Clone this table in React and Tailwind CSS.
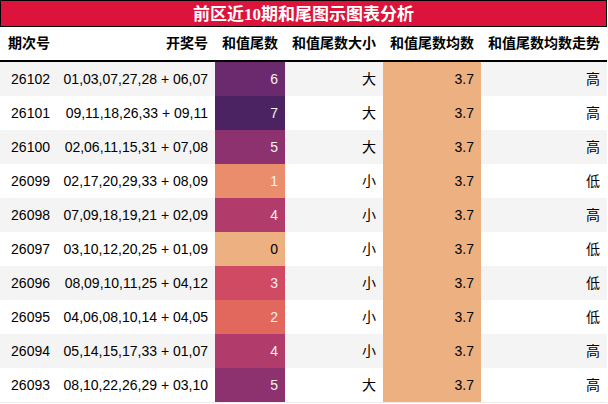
const ROWS = [
  { no: "26102", nums: "01,03,07,27,28 + 06,07", tail: 6, size: "大", avg: "3.7", trend: "高" },
  { no: "26101", nums: "09,11,18,26,33 + 09,11", tail: 7, size: "大", avg: "3.7", trend: "高" },
  { no: "26100", nums: "02,06,11,15,31 + 07,08", tail: 5, size: "大", avg: "3.7", trend: "高" },
  { no: "26099", nums: "02,17,20,29,33 + 08,09", tail: 1, size: "小", avg: "3.7", trend: "低" },
  { no: "26098", nums: "07,09,18,19,21 + 02,09", tail: 4, size: "小", avg: "3.7", trend: "高" },
  { no: "26097", nums: "03,10,12,20,25 + 01,09", tail: 0, size: "小", avg: "3.7", trend: "低" },
  { no: "26096", nums: "08,09,10,11,25 + 04,12", tail: 3, size: "小", avg: "3.7", trend: "低" },
  { no: "26095", nums: "04,06,08,10,14 + 04,05", tail: 2, size: "小", avg: "3.7", trend: "低" },
  { no: "26094", nums: "05,14,15,17,33 + 01,07", tail: 4, size: "小", avg: "3.7", trend: "高" },
  { no: "26093", nums: "08,10,22,26,29 + 03,10", tail: 5, size: "大", avg: "3.7", trend: "高" },
];

// flare palette, 0 -> 7
const TAIL_BG = [
  "bg-[#edb081] text-black",
  "bg-[#ea8d6c] text-[#f1f1f1]",
  "bg-[#e2685e] text-[#f1f1f1]",
  "bg-[#d04a63] text-[#f1f1f1]",
  "bg-[#b13b6a] text-[#f1f1f1]",
  "bg-[#8e316f] text-[#f1f1f1]",
  "bg-[#6b2a6e] text-[#f1f1f1]",
  "bg-[#4b2362] text-[#f1f1f1]",
];

const HEADERS = ["期次号", "开奖号", "和值尾数", "和值尾数大小", "和值尾数均数", "和值尾数均数走势"];

const cell = "h-[34px] flex items-center justify-end px-[7px] whitespace-nowrap";

export default function App() {
  return (
    <div
      className="w-[608px] h-[404px] bg-white text-black text-[14px] overflow-hidden"
      style={{ fontFamily: '"Liberation Sans", "Noto Sans CJK SC", sans-serif' }}
    >
      <div
        className="w-[607px] h-[27px] bg-[#dc143c] border border-black flex items-center justify-center pt-px text-white font-bold text-[17px] leading-none"
        style={{ fontFamily: '"Liberation Serif", "Noto Sans CJK SC", serif' }}
      >
        前区近10期和尾图示图表分析
      </div>

      <div className="grid grid-cols-[57px_158px_70px_98px_98px_126px] w-[607px]">
        {HEADERS.map((h, i) => (
          <div
            key={h}
            className={`h-[35px] flex items-center px-[7px] font-bold whitespace-nowrap border-b-2 border-black ${i === 0 ? "justify-start pl-[8px]" : "justify-end"}`}
          >
            {h}
          </div>
        ))}

        {ROWS.map((r, idx) => {
          const rowBg = idx % 2 === 0 ? "bg-[#f4f4f4]" : "bg-white";
          return [
            <div key={r.no + "a"} className={`${cell} ${rowBg}`}>{r.no}</div>,
            <div key={r.no + "b"} className={`${cell} ${rowBg} px-[6px]`}>{r.nums}</div>,
            <div key={r.no + "c"} className={`${cell} ${TAIL_BG[r.tail]}`}>{r.tail}</div>,
            <div key={r.no + "d"} className={`${cell} ${rowBg}`}>{r.size}</div>,
            <div key={r.no + "e"} className={`${cell} bg-[#edb081]`}>{r.avg}</div>,
            <div key={r.no + "f"} className={`${cell} ${rowBg}`}>{r.trend}</div>,
          ];
        })}
      </div>
      <div className="w-[607px] h-px bg-[#ececec]" />
    </div>
  );
}
